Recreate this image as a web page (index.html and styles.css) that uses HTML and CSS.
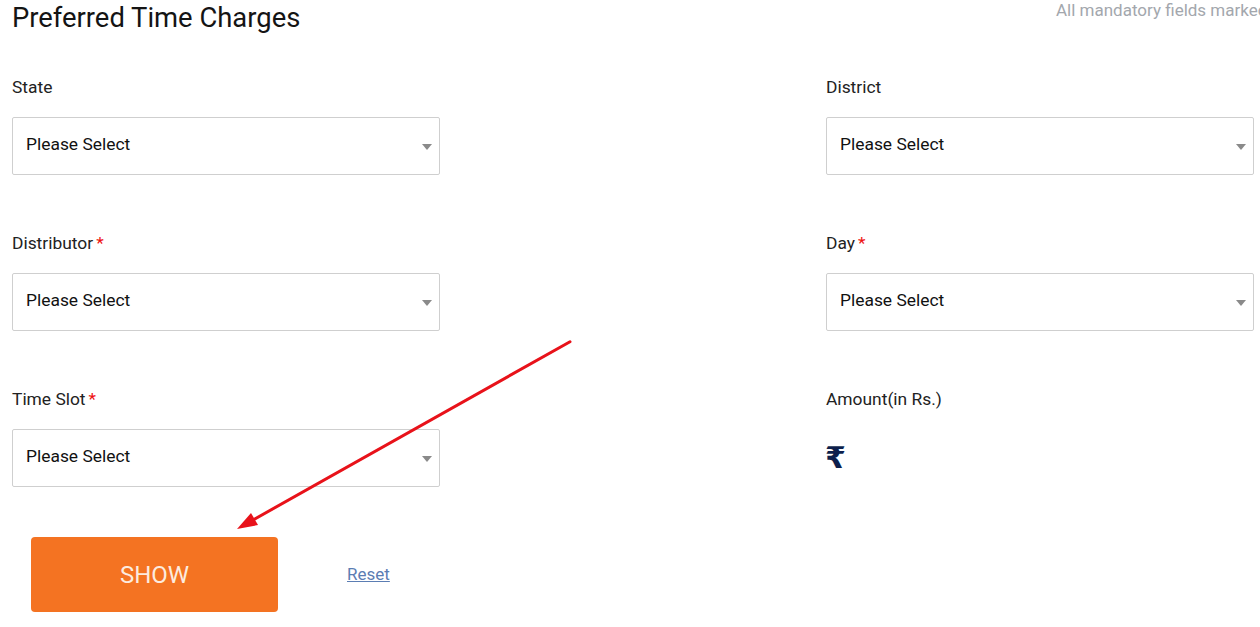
FILE: index.html
```html
<!DOCTYPE html>
<html>
<head>
<meta charset="utf-8">
<link rel="stylesheet" href="styles.css">
</head>
<body>
<div class="page">
  <div class="header">
    <h1 class="title">Preferred Time Charges</h1>
    <div class="note">All mandatory fields marked with * are mandatory</div>
  </div>
  <div class="form-grid">
    <div class="field">
      <div class="label">State</div>
      <div class="select"><span class="value">Please Select</span><i class="caret"></i></div>
    </div>
    <div class="field">
      <div class="label">District</div>
      <div class="select"><span class="value">Please Select</span><i class="caret"></i></div>
    </div>
    <div class="field">
      <div class="label">Distributor<span class="req">*</span></div>
      <div class="select"><span class="value">Please Select</span><i class="caret"></i></div>
    </div>
    <div class="field">
      <div class="label">Day<span class="req">*</span></div>
      <div class="select"><span class="value">Please Select</span><i class="caret"></i></div>
    </div>
    <div class="field">
      <div class="label">Time Slot<span class="req">*</span></div>
      <div class="select"><span class="value">Please Select</span><i class="caret"></i></div>
    </div>
    <div class="field">
      <div class="label">Amount(in Rs.)</div>
      <div class="amount"><span class="rupee">₹</span></div>
    </div>
  </div>
  <div class="actions">
    <button class="btn-show">SHOW</button>
    <a class="reset" href="#">Reset</a>
  </div>
</div>
<svg class="annot" width="1260" height="627" viewBox="0 0 1260 627">
  <line x1="570" y1="341.7" x2="254.4" y2="519.2" stroke="#e8121a" stroke-width="3" stroke-linecap="round"/>
  <polygon points="237,529 258,525 251,513" fill="#e8121a"/>
</svg>
</body>
</html>
```

FILE: styles.css
```css
html, body {
  margin: 0;
  padding: 0;
  overflow: hidden;
  background: #ffffff;
}
body {
  font-family: Roboto, "Liberation Sans", Arial, sans-serif;
  color: #1d1d1d;
  width: 1260px;
  height: 627px;
  position: relative;
}
.page {
  padding: 0 12px;
}
.header {
  display: grid;
  grid-template-columns: 1044px 600px;
  align-items: start;
}
.title {
  margin: 0;
  font-size: 27.4px;
  line-height: 36px;
  font-weight: 400;
  color: #141414;
}
.note {
  font-size: 17px;
  line-height: 20px;
  color: #a3a7ad;
  white-space: nowrap;
}
.form-grid {
  margin-top: 39px;
  display: grid;
  grid-template-columns: 428px 428px;
  column-gap: 386px;
  row-gap: 56px;
}
.label {
  font-size: 17.4px;
  line-height: 24px;
  color: #222222;
  margin-bottom: 18px;
}
.req {
  color: #ee1111;
  margin-left: 3px;
}
.select {
  box-sizing: border-box;
  height: 58px;
  border: 1px solid #cfcfcf;
  border-radius: 2px;
  display: flex;
  align-items: center;
  justify-content: space-between;
  padding: 0 7px 0 13px;
  font-size: 17.4px;
  color: #111111;
}
.value {
  margin-bottom: 4px;
}
.caret {
  width: 0;
  height: 0;
  border-left: 5px solid transparent;
  border-right: 5px solid transparent;
  border-top: 6px solid #8a8a8a;
  margin-top: 2px;
}
.amount {
  height: 58px;
  display: flex;
  align-items: center;
}
.rupee {
  font-family: "DejaVu Sans", Roboto, sans-serif;
  font-weight: 700;
  font-size: 30px;
  line-height: 30px;
  color: #0d1f4c;
  margin-left: -1px;
}
.actions {
  margin-top: 50px;
  display: flex;
  align-items: center;
  padding-left: 19px;
  gap: 69px;
}
.btn-show {
  width: 247px;
  height: 75px;
  background: #f47322;
  border: none;
  border-radius: 4px;
  color: #fcebdf;
  font-family: Roboto, "Liberation Sans", sans-serif;
  font-size: 24px;
  padding: 0;
}
.reset {
  font-size: 17px;
  color: #5b7db3;
  text-decoration: underline;
  margin-bottom: 2px;
}
.annot {
  position: absolute;
  left: 0;
  top: 0;
  pointer-events: none;
}
```
